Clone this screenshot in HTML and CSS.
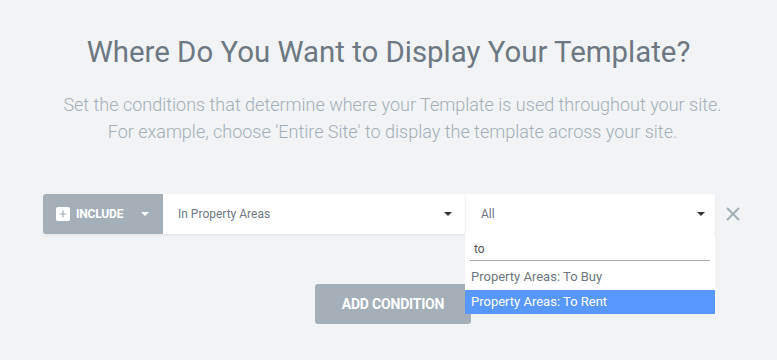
FILE: index.html
```html
<!DOCTYPE html>
<html>
<head>
<meta charset="utf-8">
<link rel="stylesheet" href="styles.css">
</head>
<body>
<div class="page">
  <h1 class="title">Where Do You Want to Display Your Template?</h1>
  <p class="subtitle">Set the conditions that determine where your Template is used throughout your site.<br>For example, choose 'Entire Site' to display the template across your site.</p>
  <div class="row">
    <div class="include">
      <span class="plus"><svg width="14" height="14" viewBox="0 0 14 14"><rect x="0" y="0" width="14" height="14" rx="2" fill="#fff"/><path d="M7 3.5v7M3.5 7h7" stroke="#a4afb7" stroke-width="1.2"/></svg></span>
      <span class="include-label">INCLUDE</span>
      <span class="caret white"></span>
    </div>
    <div class="select sel1">
      <span class="sel-text">In Property Areas</span>
      <span class="caret"></span>
    </div>
    <div class="select sel2">
      <span class="sel-text">All</span>
      <span class="caret"></span>
      <div class="dropdown">
        <div class="search"><span class="search-text">to</span></div>
        <div class="option first">Property Areas: To Buy</div>
        <div class="option active">Property Areas: To Rent</div>
      </div>
    </div>
    <div class="remove"><svg width="16" height="16" viewBox="0 0 16 16"><path d="M2 2L14 14M14 2L2 14" stroke="#a4afb7" stroke-width="2"/></svg></div>
  </div>
  <div class="actions">
    <button class="add">ADD CONDITION</button>
  </div>
</div>
</body>
</html>
```
FILE: styles.css
```css
html, body {
  margin: 0;
  padding: 0;
  background: #f1f3f5;
  font-family: Roboto, "Noto Sans", sans-serif;
}
.page {
  width: 777px;
  height: 360px;
  display: flex;
  flex-direction: column;
  align-items: center;
  overflow: hidden;
}
.title {
  margin: 33px 0 0;
  font-size: 29.4px;
  font-weight: 400;
  line-height: 38px;
  color: #6d7882;
}
.subtitle {
  margin: 20px 0 0;
  padding-left: 8px;
  font-size: 18px;
  font-weight: 300;
  line-height: 27px;
  color: #a4afb7;
  text-align: center;
}
.row {
  margin-top: 49px;
  align-self: flex-start;
  margin-left: 43px;
  display: flex;
  height: 40px;
  position: relative;
  z-index: 2;
}
.include {
  width: 120px;
  background: #a4afb7;
  border-radius: 3px 0 0 3px;
  display: flex;
  align-items: center;
  padding-left: 13px;
  box-sizing: border-box;
  box-shadow: 0 2px 3px rgba(0,0,0,0.05);
}
.plus { display: flex; width: 14px; height: 14px; }
.include-label {
  margin-left: 6px;
  color: #fff;
  font-size: 12px;
  font-weight: 700;
  letter-spacing: -0.2px;
}
.caret {
  width: 0;
  height: 0;
  border-left: 4px solid transparent;
  border-right: 4px solid transparent;
  border-top: 4px solid #333;
  margin-left: auto;
}
.caret.white {
  border-top-color: #fff;
  margin-left: 18px;
}
.select {
  background: #fff;
  display: flex;
  align-items: center;
  box-sizing: border-box;
  position: relative;
  box-shadow: 0 2px 3px rgba(0,0,0,0.05);
}
.sel1 { width: 302px; padding: 0 13px 0 15px; }
.sel2 { width: 250px; padding: 0 10px 0 15px; border-left: 1px solid #f1f3f5; border-radius: 0 3px 3px 0; }
.sel-text {
  font-size: 12px;
  color: #6d7882;
}
.dropdown {
  position: absolute;
  left: -1px;
  top: 40px;
  width: 250px;
  background: #fff;
  padding-top: 4px;
}
.search {
  margin: 0 5px;
  height: 22px;
  border-bottom: 1px solid #aaa;
  display: flex;
  align-items: center;
  padding-left: 4px;
}
.search-text { font-size: 12px; color: #555; }
.option {
  height: 24px;
  line-height: 24px;
  font-size: 13px;
  padding-left: 6px;
  color: #6d7882;
}
.option.first {
  margin-top: 2px;
  height: 27px;
  line-height: 27px;
}
.option.active {
  background: #5897fb;
  color: #fff;
}
.remove {
  width: 36px;
  display: flex;
  align-items: center;
  justify-content: center;
}
.actions {
  margin-top: 50px;
  display: flex;
  justify-content: center;
}
.add {
  width: 156px;
  height: 40px;
  margin-left: 9px;
  border: none;
  border-radius: 3px;
  background: #a4afb7;
  color: #fff;
  font-family: Roboto, sans-serif;
  font-size: 14px;
  font-weight: 700;
  letter-spacing: -0.2px;
}
```
